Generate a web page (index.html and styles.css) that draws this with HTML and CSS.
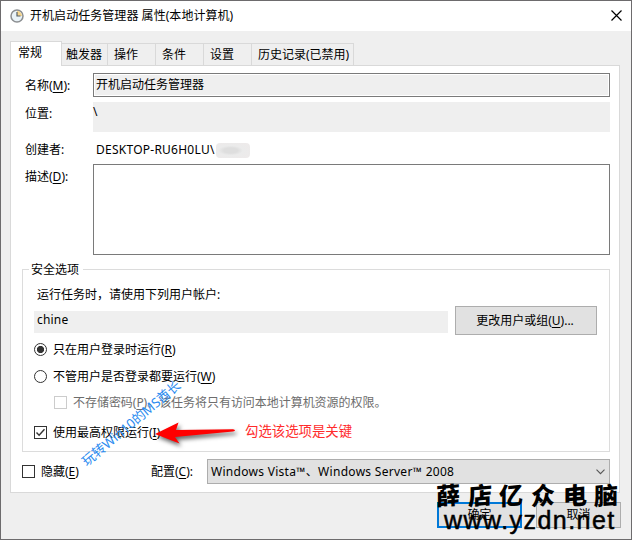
FILE: index.html
```html
<!DOCTYPE html>
<html lang="zh-CN">
<head>
<meta charset="utf-8">
<title>开机启动任务管理器 属性</title>
<link rel="stylesheet" href="styles.css">
</head>
<body>
<div class="window">
  <header class="titlebar">
    <svg class="clock" width="14" height="14" viewBox="0 0 14 14"><circle cx="7" cy="7" r="6" fill="#e9f2f7" stroke="#8b8e91" stroke-width="1.5"/><path d="M7 2v5h5A5 5 0 0 0 7 2" fill="#f6d58c"/><path d="M7 3v4h3.5" fill="none" stroke="#555f68" stroke-width="1.2"/></svg>
    <h1 class="t">开机启动任务管理器 属性(本地计算机)</h1>
    <svg class="close" width="11" height="11" viewBox="0 0 11 11"><path d="M.5.5l10 10M10.500.5l-10 10" stroke="#000" stroke-width="1.2"/></svg>
  </header>
  <nav class="tabs">
    <span class="tab active">常规</span><span class="tab w1">触发器</span><span class="tab w2">操作</span><span class="tab w2">条件</span><span class="tab w2">设置</span><span class="tab w3">历史记录(已禁用)</span>
  </nav>
  <main class="panel">
    <div class="row name"><label>名称(<u>M</u>):</label><div class="field">开机启动任务管理器</div></div>
    <div class="row location"><label>位置:</label><div class="field">\</div></div>
    <div class="row creator"><label>创建者:</label><div class="field"><span class="host">DESKTOP-RU6H0LU\</span><i class="smudge"></i></div></div>
    <div class="row desc"><label>描述(<u>D</u>):</label><div class="field"></div></div>
    <section class="group">
      <h2>安全选项</h2>
      <p class="hint">运行任务时，请使用下列用户帐户:</p>
      <div class="account"><div class="user">chine</div><button class="change">更改用户或组(<u>U</u>)...</button></div>
      <div class="option r1"><i class="radio on"></i><span>只在用户登录时运行(<u>R</u>)</span></div>
      <div class="option r2"><i class="radio"></i><span>不管用户是否登录都要运行(<u>W</u>)</span></div>
      <div class="option nostore"><i class="check"></i><span>不存储密码(<u>P</u>)。该任务将只有访问本地计算机资源的权限。</span></div>
      <div class="option highest"><i class="check"><svg width="11" height="11" viewBox="0 0 11 11"><path d="M1.500 5.500l2.600 2.700 5.400-6" fill="none" stroke="#333" stroke-width="1.4"/></svg></i><span>使用最高权限运行(<u>I</u>)</span></div>
    </section>
    <div class="config">
      <div class="option hide"><i class="check"></i><span>隐藏(<u>E</u>)</span></div>
      <label>配置(<u>C</u>):</label>
      <div class="select"><span>Windows Vista™、Windows Server™ 2008</span><svg width="9" height="6" viewBox="0 0 9 6"><path d="M.5.7l4 4 4-4" fill="none" stroke="#555" stroke-width="1.1"/></svg></div>
    </div>
  </main>
  <footer><button class="ok">确定</button><button>取消</button></footer>
</div>
<div class="diagonal">玩转Win10的MS酋长</div>
<svg class="arrow" width="100" height="40" viewBox="150 415 100 40"><path d="M155 434L178.500 422.500 176 430 233 429.300Q237 430.500 233 431.500L175 437 179.500 443.500Z" fill="#f00"/></svg>
<div class="note">勾选该选项是关键</div>
<div class="brand"><span>薛</span><span>店</span><span>亿</span><span>众</span><span>电</span><span>脑</span></div>
<div class="site">www.yzdn.net</div>
</body>
</html>
```
FILE: styles.css
```css
* { box-sizing: border-box; }
body { margin: 0; width: 632px; height: 540px; overflow: hidden; position: relative; background: #fff; font: 12px/16px "Noto Sans", "Noto Sans CJK SC", sans-serif; color: #000; white-space: nowrap; }
h1, h2, p { margin: 0; font: inherit; }
u { text-underline-offset: 2px; text-decoration-thickness: 1px; }
i { display: block; flex: none; }
.window { width: 632px; height: 540px; border: 1px solid #6d6b6d; background: #efefef; }
.titlebar { height: 30px; background: #fff; display: flex; align-items: center; padding: 0 9px 0 9px; }
.titlebar .t { margin-left: 6px; flex: 1; letter-spacing: .05px; }
.close { margin-bottom: 2px; }
.tabs { display: flex; align-items: flex-end; height: 34px; padding-left: 9px; }
.tab { height: 22px; border: 1px solid #d9d9d9; border-left: 0; border-bottom: 0; padding: 3px 0 0 6px; }
.tab.active { width: 52px; height: 25px; border-left: 1px solid #d9d9d9; background: #fff; padding-left: 7px; position: relative; margin-bottom: -1px; }
.w1 { width: 46px; padding-left: 4px; }
.w2 { width: 48px; }
.w3 { width: 102px; }
.panel { margin-left: 9px; width: 610px; height: 428px; border: 1px solid #d9d9d9; background: #fff; padding: 7px 9px 0 11px; }
.row { display: flex; padding-left: 3px; }
.row label { width: 68px; flex: none; }
.row .field { flex: 1; }
.name { height: 29px; }
.name label { padding-top: 5px; }
.name .field { height: 24px; border: 1px solid #7a7a7a; box-shadow: inset 0 0 0 1px #fff; background: #efefef; padding: 3px 2px; }
.location { height: 40px; }
.location label { padding-top: 4px; }
.location .field { height: 30px; background: #efefef; padding-top: 2px; }
.creator { height: 22px; }
.creator .field { display: flex; padding-left: 3px; }
.host { width: 120px; letter-spacing: .25px; }
.smudge { width: 34px; height: 15px; margin-top: 1px; border-radius: 4px; background: radial-gradient(ellipse at 43% 50%, #dedede 25%, #ebebeb 45%, #eeeaea); }
.desc { height: 105px; }
.desc label { padding-top: 5px; }
.desc .field { height: 91px; border: 1px solid #7a7a7a; }
.group { height: 183px; border: 1px solid #dcdcdc; padding-left: 11px; }
.group h2 { width: 54px; height: 16px; margin: -8px 0 0 -5px; padding-left: 2px; background: #fff; }
.hint { margin: 9px 0 0 3px; }
.account { display: flex; height: 30px; margin-top: 3px; }
.user { width: 414px; height: 22px; margin: 5px 7px 0 0; background: #efefef; padding: 1px 3px; letter-spacing: .2px; }
button { font: inherit; color: inherit; padding: 0; border: 1px solid #adadad; background: #e1e1e1; }
.change { width: 142px; height: 29px; padding-right: 2px; }
.option { display: flex; align-items: center; height: 16px; }
.option span { margin-left: 6px; }
.radio { width: 13px; height: 13px; border: 1px solid #333; border-radius: 50%; margin-bottom: 1px; }
.radio.on { background: radial-gradient(circle, #333 3.2px, transparent 4px); }
.check { width: 13px; height: 13px; border: 1px solid #333; margin-bottom: 1px; }
.check svg { display: block; }
.r1 { margin-top: 6px; }
.r2 { margin-top: 11px; }
.nostore { margin: 10px 0 0 20px; color: #6d6d6d; letter-spacing: -.04px; }
.nostore .check { border-color: #ccc; }
.highest { margin-top: 14px; }
.config { display: flex; align-items: center; height: 25px; margin-top: 7px; }
.hide { width: 129px; }
.config label { width: 56px; }
.select { flex: 1; height: 25px; border: 1px solid #adadad; background: #e1e1e1; display: flex; align-items: center; justify-content: space-between; padding: 0 4px 0 3px; letter-spacing: .29px; }
footer { display: flex; justify-content: flex-end; gap: 14px; padding: 9px 10px 0 0; }
footer button { width: 85px; height: 26px; }
.ok { border: 2px solid #0078d7; }
.diagonal { position: absolute; left: 66px; top: 415px; width: 130px; text-align: center; font-size: 13.2px; color: #2b8cf0; transform: rotate(-40deg); }
.arrow { position: absolute; left: 150px; top: 415px; filter: drop-shadow(2px 3px 2px rgba(0,0,0,.6)); }
.note { position: absolute; left: 245px; top: 423px; font-size: 13.4px; color: #ff2b2b; }
.brand { position: absolute; left: 436px; top: 479px; display: flex; font: 900 24px/30px "Noto Sans CJK SC", sans-serif; }
.brand span { width: 31.7px; transform: skewY(-5deg); }
.site { position: absolute; left: 444px; top: 506px; font: 25px/28px "Liberation Sans", sans-serif; letter-spacing: 1.45px; -webkit-text-stroke: .5px #000; }
```
